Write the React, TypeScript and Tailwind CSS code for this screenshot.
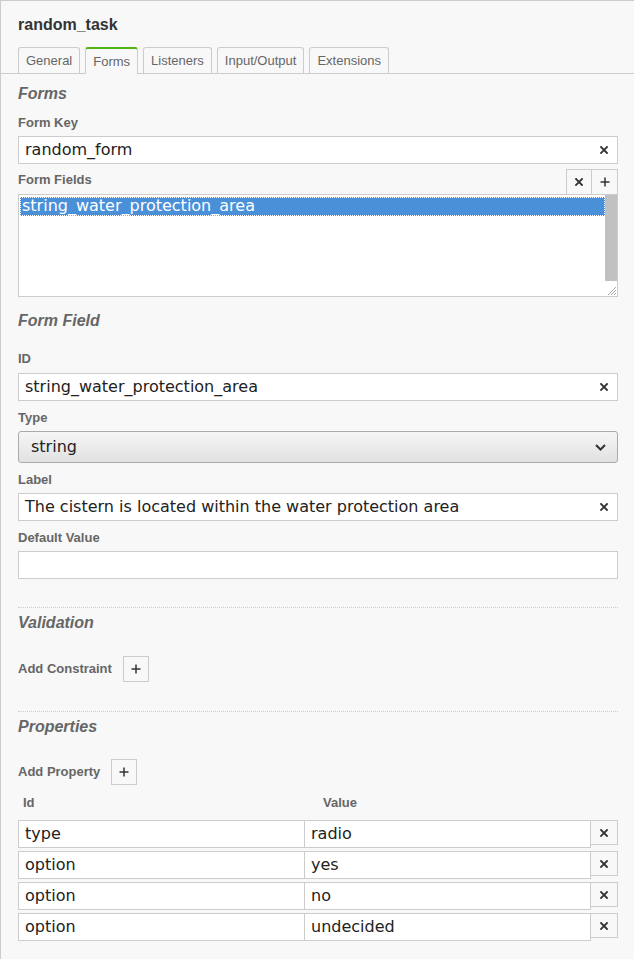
import type { ReactNode } from 'react'

const sans = "font-['Liberation_Sans',Arial,sans-serif]"
const mono = "font-['DejaVu_Sans',sans-serif]"

function XIcon() {
  return (
    <svg width="8" height="8" viewBox="0 0 8 8" className="shrink-0">
      <path d="M1 1 L7 7 M7 1 L1 7" stroke="#333" strokeWidth="1.8" strokeLinecap="square" />
    </svg>
  )
}

function PlusIcon() {
  return (
    <svg width="10" height="10" viewBox="0 0 10 10" className="shrink-0">
      <path d="M5 0.5 V9.5 M0.5 5 H9.5" stroke="#333" strokeWidth="1.5" />
    </svg>
  )
}

function Label({ children, className = '' }: { children: ReactNode; className?: string }) {
  return (
    <div className={`h-[16px] text-[13px] leading-[16px] font-bold text-[#666] ${className}`}>
      {children}
    </div>
  )
}

function Heading({ children, className = '' }: { children: ReactNode; className?: string }) {
  return (
    <div className={`h-[20px] text-[16px] leading-[20px] font-bold italic text-[#666] ${className}`}>
      {children}
    </div>
  )
}

function TextInput({ value, clear = true, className = '' }: { value: string; clear?: boolean; className?: string }) {
  return (
    <div className={`flex h-[28px] items-center border border-[#ccc] bg-white ${className}`}>
      <span className={`flex-1 pl-[6px] text-[16px] leading-[20px] text-[#222] ${mono}`}>{value}</span>
      {clear && (
        <span className="mr-[9px] flex">
          <XIcon />
        </span>
      )}
    </div>
  )
}

function AddRow({ label, gap }: { label: string; gap: string }) {
  return (
    <div className="flex h-[26px] items-center">
      <Label className={gap}>{label}</Label>
      <button className="flex h-[26px] w-[26px] items-center justify-center border border-[#ccc] bg-[#f8f8f8]">
        <PlusIcon />
      </button>
    </div>
  )
}

const tabs = ['General', 'Forms', 'Listeners', 'Input/Output', 'Extensions']

const props = [
  { id: 'type', value: 'radio' },
  { id: 'option', value: 'yes' },
  { id: 'option', value: 'no' },
  { id: 'option', value: 'undecided' },
]

export default function App() {
  return (
    <div className={`h-[959px] w-[634px] overflow-hidden border-l border-t border-[#ccc] bg-[#f8f8f8] ${sans}`}>
      <div className="ml-[17px] mt-[14px] h-[20px] text-[16px] leading-[20px] font-bold text-[#333]">random_task</div>

      <div className="mt-[12px] flex h-[27px] items-end gap-[5px] border-b border-[#ccc] pl-[17px]">
        {tabs.map((t) =>
          t === 'Forms' ? (
            <div
              key={t}
              className="relative -mb-px flex h-[27px] items-center rounded-t-[3px] border border-b-0 border-[#ccc] border-t-2 border-t-[#52b415] bg-[#f8f8f8] px-[7px] text-[13px] text-[#666]"
            >
              {t}
            </div>
          ) : (
            <div
              key={t}
              className="flex h-[26px] items-center rounded-t-[3px] border border-b-0 border-[#ccc] bg-[#f8f8f8] px-[7px] text-[13px] text-[#666]"
            >
              {t}
            </div>
          ),
        )}
      </div>

      <div className="pl-[17px] pr-[16px]">
        <Heading className="mt-[10px]">Forms</Heading>
        <Label className="mt-[11px]">Form Key</Label>
        <TextInput value="random_form" className="mt-[5px]" />

        <div className="mt-[5px] flex h-[25px] justify-between">
          <Label className="mt-[3px]">Form Fields</Label>
          <div className="flex">
            <button className="flex h-[25px] w-[26px] items-center justify-center border border-b-0 border-[#ccc] bg-[#f8f8f8]">
              <XIcon />
            </button>
            <button className="flex h-[25px] w-[26px] items-center justify-center border border-b-0 border-l-0 border-[#ccc] bg-[#f8f8f8]">
              <PlusIcon />
            </button>
          </div>
        </div>
        <div className="relative flex h-[103px] border border-[#ccc] bg-white">
          <div className="flex-1 pl-px pt-[2px]">
            <div className={`h-[19px] bg-[#4a90d9] pl-[2px] text-[16px] leading-[18px] text-white outline-1 outline-dotted outline-white -outline-offset-1 ${mono}`}>
              string_water_protection_area
            </div>
          </div>
          <div className="flex w-[12px] flex-col">
            <div className="h-[86px] bg-[#c1c1c1]" />
            <div className="flex-1" />
          </div>
          <svg width="12" height="12" viewBox="0 0 12 12" className="absolute bottom-0 right-0">
            <path d="M11 3 L3 11 M11 6 L6 11 M11 9 L9 11" stroke="#aaa" strokeWidth="1" />
          </svg>
        </div>

        <Heading className="mt-[14px]">Form Field</Heading>
        <Label className="mt-[20px]">ID</Label>
        <TextInput value="string_water_protection_area" className="mt-[6px]" />

        <Label className="mt-[9px]">Type</Label>
        <div className="mt-[5px] flex h-[32px] items-center justify-between rounded-[3px] border border-[#aaa] bg-gradient-to-b from-[#f6f6f6] to-[#e1e1e1] pl-[12px] pr-[11px]">
          <span className={`text-[16px] leading-[20px] text-[#222] ${mono}`}>string</span>
          <svg width="11" height="7" viewBox="0 0 11 7">
            <path d="M1 1 L5.5 5.5 L10 1" stroke="#333" strokeWidth="2" fill="none" />
          </svg>
        </div>

        <Label className="mt-[9px]">Label</Label>
        <TextInput value="The cistern is located within the water protection area" className="mt-[5px]" />

        <Label className="mt-[9px]">Default Value</Label>
        <TextInput value="" clear={false} className="mt-[5px]" />

        <div className="mt-[28px] border-t border-dotted border-[#ccc]" />
        <Heading className="mt-[5px]">Validation</Heading>
        <div className="mt-[23px]">
          <AddRow label="Add Constraint" gap="mr-[11px]" />
        </div>

        <div className="mt-[29px] border-t border-dotted border-[#ccc]" />
        <Heading className="mt-[5px]">Properties</Heading>
        <div className="mt-[22px]">
          <AddRow label="Add Property" gap="mr-[11px]" />
        </div>

        <div className="mt-[10px] grid grid-cols-[286px_286px_28px]">
          <Label className="pl-[5px]">Id</Label>
          <Label className="pl-[19px]">Value</Label>
          <div />
        </div>

        <div className="mt-[9px] flex flex-col gap-[3px]">
          {props.map((p, i) => (
            <div key={i} className="flex h-[28px] items-start">
              <div className={`flex h-[28px] w-[287px] items-center border border-[#ccc] bg-white pl-[6px] text-[16px] text-[#222] ${mono}`}>
                {p.id}
              </div>
              <div className={`-ml-px flex h-[28px] w-[287px] items-center border border-[#ccc] bg-white pl-[6px] text-[16px] text-[#222] ${mono}`}>
                {p.value}
              </div>
              <button className="-ml-px flex h-[25px] w-[28px] items-center justify-center border border-[#ccc] bg-[#f8f8f8]">
                <XIcon />
              </button>
            </div>
          ))}
        </div>
      </div>
    </div>
  )
}
